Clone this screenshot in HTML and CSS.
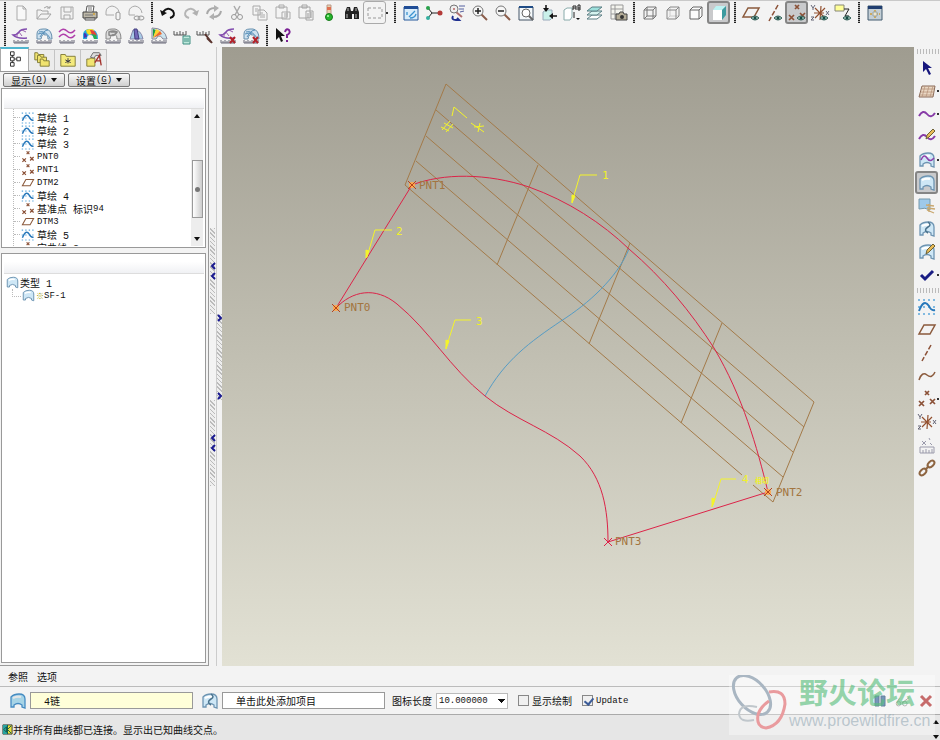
FILE: index.html
```
<!DOCTYPE html>
<html lang="zh-CN">
<head>
  <meta charset="UTF-8" />
  <meta name="viewport" content="width=device-width, initial-scale=1" />
  <title>曲面建模</title>
  <link rel="stylesheet" href="styles.css">
</head>
<body>

<!-- icon set -->
<svg class="sprite" aria-hidden="true">
  <symbol id="new" viewBox="0 0 20 20"><path d="M6 3h6l3 3v11H6zM12 3v3h3" fill="#f8f8f8" stroke="#aaa"/></symbol>
  <symbol id="open" viewBox="0 0 20 20"><path d="M3 16V7h4l1 1h6v3M3 16l4-5h10l-4 5zM10 5q3-3 6 0M16 3v2h-3" fill="none" stroke="#a4a4a4"/></symbol>
  <symbol id="save" viewBox="0 0 20 20"><path d="M4 4h12v12H4zM7 4v5h7V4M7 16v-4h6v4" fill="none" stroke="#a8a8a8"/></symbol>
  <symbol id="print" viewBox="0 0 20 20"><path d="M6 9l1-6h7l-1 6" fill="#fff" stroke="#555"/><path d="M3 9h14v6H3z" fill="#bdb8a8" stroke="#444"/><path d="M5 15h10v2H5z" fill="#eee" stroke="#555"/><path d="M8 5h4M8 7h4M5 12h8" stroke="#777"/><path d="M13 11h2" stroke="#d90"/></symbol>
  <symbol id="mail" viewBox="0 0 20 20"><path d="M11 12H3V9q0-5 6-6 6 1 7 6" fill="none" stroke="#aaa"/><path d="M13 10v6q2 2 4 0v-6q-2-2-4 0z" fill="#f4f4f4" stroke="#999"/></symbol>
  <symbol id="link" viewBox="0 0 20 20"><path d="M9 12H3V9q0-5 6-6 6 1 7 7" fill="none" stroke="#aaa"/><ellipse cx="11" cy="15" rx="3" ry="2" fill="none" stroke="#999"/><ellipse cx="15" cy="15" rx="3" ry="2" fill="none" stroke="#999"/></symbol>
  <symbol id="undo" viewBox="0 0 20 20"><path d="M5 9q5-6 10-1 3 5-3 7" fill="none" stroke="#111" stroke-width="2"/><path d="M2 7l2 6 5-3z" fill="#111"/></symbol>
  <symbol id="redo" viewBox="0 0 20 20"><path d="M15 9q-5-6-10-1-3 5 3 7" fill="none" stroke="#b5b5b5" stroke-width="2"/><path d="M18 7l-2 6-5-3z" fill="#b0b0b0"/></symbol>
  <symbol id="regen" viewBox="0 0 20 20"><path d="M3 11q1-6 8-6M17 8q-1 6-8 6" fill="none" stroke="#a8a8a8" stroke-width="2"/><path d="M10 2l5 3-5 4zM10 10l-5 4 5 3z" fill="#b0b0b0"/></symbol>
  <symbol id="cut" viewBox="0 0 20 20"><path d="M7 3l5 9M13 3l-5 9" stroke="#aaa" stroke-width="1.5"/><circle cx="7" cy="14" r="2.5" fill="none" stroke="#999"/><circle cx="13" cy="14" r="2.5" fill="none" stroke="#999"/></symbol>
  <symbol id="copy" viewBox="0 0 20 20"><path d="M3 3h7v9H3zM8 7h6l3 3v7H8z" fill="#f4f4f4" stroke="#a8a8a8"/><path d="M5 6h3M5 8h2M10 10h3M10 12h5M10 14h5" stroke="#aaa"/></symbol>
  <symbol id="paste" viewBox="0 0 20 20"><path d="M3 4h11v11H3zM6 2h5v3H6zM9 9h8v7H9z" fill="#f4f4f4" stroke="#aaa"/><path d="M11 11h4M11 13h4" stroke="#aaa"/></symbol>
  <symbol id="special" viewBox="0 0 20 20"><path d="M3 4h11v11H3zM6 2h5v3H6zM10 8h7v9h-7z" fill="#f4f4f4" stroke="#a4a4a4"/><path d="M12 10v5M14 10h2M14 12h2M14 14h2" stroke="#999"/></symbol>
  <symbol id="light" viewBox="0 0 20 20"><path d="M8 2h4v10H8z" fill="#e7d3b0" stroke="#b98"/><path d="M8 4h4v3H8z" fill="#e07050"/><circle cx="10" cy="14" r="3.5" fill="#25b52c" stroke="#177a1a"/><circle cx="9" cy="13" r="1" fill="#b5ffae"/></symbol>
  <symbol id="find" viewBox="0 0 20 20"><path d="M3 9l2-5h3l1 4h2l1-4h3l2 5v7h-5v-5h-2v5H3z" fill="#222"/><path d="M5 11v4M14 11v4M6 5v3M14 5v3" stroke="#bbb"/></symbol>
  <symbol id="select" viewBox="0 0 20 20"><path d="M3 5h14v10H3z" fill="none" stroke="#999" stroke-dasharray="3 2"/></symbol>
  <symbol id="repaint" viewBox="0 0 20 20"><path d="M3 4h14v13H3z" fill="#d8ecfa" stroke="#285a9b"/><path d="M3 3h14v3H3z" fill="#1f4c96"/><path d="M8 14l6-6M9 15q5 0 6-4M6 9v3" fill="none" stroke="#3c93d0" stroke-width="1.3"/></symbol>
  <symbol id="spin" viewBox="0 0 20 20"><path d="M4 5l4 5-4 5M8 10h8" fill="none" stroke="#222"/><circle cx="4" cy="5" r="2" fill="#28a14a"/><circle cx="4" cy="15" r="2" fill="#35b0a0"/><circle cx="16" cy="10" r="2.5" fill="#b33a38"/></symbol>
  <symbol id="orient" viewBox="0 0 20 20"><path d="M9 9l6 5" stroke="#b07070" stroke-width="2"/><circle cx="7" cy="6" r="4" fill="#eee" stroke="#777"/><path d="M12 3h6M12 6h5M13 9l4-1" stroke="#5560a0"/><circle cx="7" cy="6" r="1" fill="#b66"/><path d="M6 13q-2 4 3 4h3l-2-2" fill="none" stroke="#203090" stroke-width="2"/></symbol>
  <symbol id="zoomin" viewBox="0 0 20 20"><path d="M11 11l6 6" stroke="#8b5d4a" stroke-width="2"/><circle cx="8" cy="8" r="5" fill="#f6f6f6" stroke="#777"/><path d="M5 8h6M8 5v6" stroke="#222" stroke-width="1.5"/></symbol>
  <symbol id="zoomout" viewBox="0 0 20 20"><path d="M11 11l6 6" stroke="#8b5d4a" stroke-width="2"/><circle cx="8" cy="8" r="5" fill="#f6f6f6" stroke="#777"/><path d="M5 8h6" stroke="#222" stroke-width="1.5"/></symbol>
  <symbol id="refit" viewBox="0 0 20 20"><path d="M3 4h14v13H3z" fill="#f4f8fa" stroke="#456"/><path d="M3 3h14v2H3z" fill="#1f4c86"/><circle cx="10" cy="10" r="4" fill="#fff" stroke="#666"/><path d="M13 13l4 4" stroke="#666" stroke-width="2"/></symbol>
  <symbol id="reorient" viewBox="0 0 20 20"><path d="M4 9l3-2h6v8l-2 2H4z" fill="#c9f0ea" stroke="#9ab"/><path d="M7 2v5M18 13h-5" stroke="#111" stroke-width="1.5"/><path d="M4 5h6L7 9zM14 10v6l-4-3z" fill="#111"/></symbol>
  <symbol id="views" viewBox="0 0 20 20"><path d="M2 7l3-2h5v9l-2 3H2z" fill="#fff" stroke="#8aa"/><path d="M11 7V3h3v4M11 5h3M16 7V2h2v5h-2M16 5h2M12 9v6" fill="none" stroke="#222"/><path d="M14 15h4l-2 2z" fill="#111"/></symbol>
  <symbol id="layers" viewBox="0 0 20 20"><g stroke="#5b7f84"><path d="M2 16l5-4h10l-5 4z" fill="#fff"/><path d="M2 12l5-4h10l-5 4z" fill="#d5f3ef"/><path d="M2 8l5-4h10l-5 4z" fill="#9de0dc"/></g></symbol>
  <symbol id="capture" viewBox="0 0 20 20"><path d="M3 2h12v14H3zM3 6h12M7 2v14M3 11h12" fill="#f4f4ee" stroke="#999"/><path d="M8 11h3l1-2h3l1 2h3v6H8z" fill="#b5ad98" stroke="#444"/><circle cx="14" cy="14" r="2" fill="#333"/></symbol>
  <symbol id="wire" viewBox="0 0 20 20"><path d="M4 7h9v9H4zM7 4h9v9H7zM4 7l3-3M13 7l3-3M4 16l3-3M13 16l3-3" fill="none" stroke="#777"/></symbol>
  <symbol id="hidden" viewBox="0 0 20 20"><path d="M7 4v9h9M4 16l3-3" fill="none" stroke="#ccc"/><path d="M4 7h9v9H4zM4 7l3-3h9v9l-3 3M13 7l3-3" fill="none" stroke="#888"/></symbol>
  <symbol id="nohidden" viewBox="0 0 20 20"><path d="M4 7h9v9H4zM4 7l3-3h9v9l-3 3M13 7l3-3" fill="#fbfbfb" stroke="#666"/></symbol>
  <symbol id="shade" viewBox="0 0 20 20"><path d="M4 7l3-4h10l-4 4z" fill="#bdf3f3"/><path d="M13 7l4-4v9l-4 5z" fill="#3d9ba0"/><path d="M4 7h9v10H4z" fill="#fff"/></symbol>
  <symbol id="eye" viewBox="0 0 20 20"><path d="M10 15q4-4 8 0-4 4-8 0z" fill="#9fc5bb" stroke="#345f58"/><circle cx="14" cy="15" r="1.5" fill="#174b45"/></symbol>
  <symbol id="plane" viewBox="0 0 20 20"><path d="M7 5h11l-5 9H2z" fill="none" stroke="#8b5a3c" stroke-width="1.5"/></symbol>
  <symbol id="axis" viewBox="0 0 20 20"><path d="M14 2L5 18" stroke="#8b5137" stroke-width="1.5" stroke-dasharray="5 2"/></symbol>
  <symbol id="points" viewBox="0 0 20 20"><path d="M8 2l4 4M12 2L8 6M2 12l5 5M7 12l-5 5M13 10l5 5M18 10l-5 5" stroke="#8b5137" stroke-width="1.7"/></symbol>
  <symbol id="csys" viewBox="0 0 20 20"><path d="M11 3l-1 14M5 5l10 10M5 15L15 5M4 10h10" stroke="#93502f" stroke-width="1.2"/><path d="M1 2l2 3 2-3M3 5v2M1 14h3l-3 3h3M16 8l3 4M19 8l-3 4" fill="none" stroke="#667"/></symbol>
  <symbol id="annot" viewBox="0 0 20 20"><path d="M2 2h9v6H2z" fill="#ffff98" stroke="#887"/><path d="M11 6h5l-4 7h4" fill="none" stroke="#222"/></symbol>
  <symbol id="window" viewBox="0 0 20 20"><path d="M3 3h14v14H3z" fill="#c4cfd6" stroke="#455d70"/><path d="M3 3h14v3H3z" fill="#213e70"/><path d="M10 7v9M5 11h10" stroke="#cca95e" stroke-width="2" stroke-dasharray="2 1"/><path d="M8 9h4v4H8z" fill="#eee6cc" stroke="#98a5a8"/></symbol>
  <symbol id="ruler" viewBox="0 0 20 20"><path d="M3 14v3h14v-3M5 15v2M7 14v3M9 15v2M11 14v3M13 15v2M15 14v3" fill="none" stroke="#667"/></symbol>
  <symbol id="comb" viewBox="0 0 20 20"><path d="M16 3Q10 3 8 6T2 9q4 4 14 3" fill="none" stroke="#824daf" stroke-width="1.5"/><path d="M8 6l3 4M11 4l4 2M6 8v3" stroke="#9a62ae"/></symbol>
  <symbol id="shell" viewBox="0 0 20 20"><path d="M3 13V8q0-5 6-5h3q6 1 6 10h-4q0-5-3-4-3-2-4 4z" fill="#cfe2f0" stroke="#668fad"/><path d="M5 6q6-2 11 6M6 11q4-7 8-7M4 8q5-2 7 0" fill="none" stroke="#568fb9"/></symbol>
  <symbol id="waves" viewBox="0 0 20 20"><path d="M2 6q4-5 8-1t8-1M2 11q4-5 8-1t8-1" fill="none" stroke="#b03eaa" stroke-width="1.5"/></symbol>
  <symbol id="color" viewBox="0 0 20 20"><path d="M3 13V8q1-5 7-5 8 0 8 10h-4q0-4-4-4-3 0-3 4z" fill="#28a8dc"/><path d="M9 9q-3-2-3-5 5-2 8 0 0 4-5 5z" fill="#f8dc21"/><path d="M10 4q5-1 7 6-3-2-5-1z" fill="#e5413c"/><path d="M4 12V7q3 0 3 4z" fill="#4635b4"/><path d="M12 8l4 1 1 4h-3z" fill="#26ae4d"/></symbol>
  <symbol id="shellgray" viewBox="0 0 20 20"><path d="M3 13V8q0-5 6-5h3q6 1 6 10h-4q0-5-3-4-3-2-4 4z" fill="#ddd" stroke="#888"/><path d="M6 6q4-2 8 0-3 5-8 3zM8 6h4" fill="none" stroke="#888" stroke-width="1.5"/></symbol>
  <symbol id="slope" viewBox="0 0 20 20"><path d="M4 13l3-9q8-1 10 9z" fill="#a8cbe6" stroke="#88a"/><path d="M8 3h3l2 10H9z" fill="#7468ba" stroke="#434080"/></symbol>
  <symbol id="rays" viewBox="0 0 20 20"><path d="M3 13V2q13 0 15 11h-4q-2-4-5-3l-2 3z" fill="#cce3ed" stroke="#889"/><path d="M4 12V3l3 1z" fill="#1d9a47"/><path d="M4 12L7 3l4 2z" fill="#ffd52c"/><path d="M4 12l7-7 2 3z" fill="#f06a2b"/></symbol>
  <symbol id="ticks" viewBox="0 0 20 20"><path d="M2 5v4h12V5M5 6v3M8 5v4M11 6v3" fill="none" stroke="#555"/></symbol>
  <symbol id="cross" viewBox="0 0 20 20"><path d="M12 11l5 6M17 11l-5 6" stroke="#b3222a" stroke-width="2"/></symbol>
  <symbol id="help" viewBox="0 0 20 20"><path d="M3 2v12l3-3 2 5 2-1-2-5h4z" fill="#111"/><path d="M12 6q1-4 4-2 2 3-2 5v3M14 14v2" fill="none" stroke="#7a2094" stroke-width="2"/></symbol>
  <symbol id="tree" viewBox="0 0 20 20"><path d="M5 2h4v4H5zM5 8h4v4H5zM5 14h4v4H5zM12 8h4v4h-4zM7 6v2M7 12v2M9 10h3" fill="none" stroke="#222"/></symbol>
  <symbol id="folders" viewBox="0 0 20 20"><g fill="#f0e36f" stroke="#7d7733"><path d="M2 3h3l1 2h6v6H2z"/><path d="M5 6h3l1 2h6v6H5z"/><path d="M8 10h3l1 2h6v6H8z"/></g></symbol>
  <symbol id="favorite" viewBox="0 0 20 20"><path d="M2 5h5l1 2h10v11H2z" fill="#f4ea7d" stroke="#7d7733"/><path d="M10 9v6M7 11l6 3M13 11l-6 3" stroke="#334"/></symbol>
  <symbol id="connect" viewBox="0 0 20 20"><path d="M2 10h3l1-1h5v9H2z" fill="#f1e471" stroke="#7d7733"/><path d="M6 8l3-5h7l2 3h-6l-2 3z" fill="#ddd" stroke="#666"/><path d="M11 14l5-8 2 11M13 12h5" fill="none" stroke="#a3332d" stroke-width="1.5"/></symbol>
  <symbol id="sketch" viewBox="0 0 20 20"><path d="M1 3h18M1 17h18M1 10h18" stroke="#5ca8dc" stroke-width="1.5" stroke-dasharray="2 3"/><path d="M2 14q5-13 10-5 2 5 6 4" fill="none" stroke="#2878ba" stroke-width="2"/></symbol>
  <symbol id="surface" viewBox="0 0 20 20"><path d="M3 16V6q3-3 8-3 6 0 6 5v9l-3-1v-2q-4-3-8 0v2z" fill="#cee7f6" stroke="#6d94b2" stroke-width="1.3"/><path d="M5 7q4-2 8-1" fill="none" stroke="#fff" stroke-width="2"/></symbol>
  <symbol id="surfcurve" viewBox="0 0 20 20"><path d="M4 10q3-7 6-2t7 0" fill="none" stroke="#8d3fa9" stroke-width="1.5"/></symbol>
  <symbol id="arrow" viewBox="0 0 20 20"><path d="M6 3v11l3-3 3 6 2-1-3-6h4z" fill="#17177d"/></symbol>
  <symbol id="grid" viewBox="0 0 20 20"><path d="M5 5h13l-2 11H2z" fill="#ead8c4" stroke="#8a6a58"/><path d="M5 8h12M4 11h13M3 14h13M8 5L5 16M12 5L9 16M16 5l-3 11" stroke="#b8947c" stroke-width=".8"/></symbol>
  <symbol id="curve" viewBox="0 0 20 20"><path d="M2 12q4-7 8-2t8-1" fill="none" stroke="#873ba7" stroke-width="2"/></symbol>
  <symbol id="dcurve" viewBox="0 0 20 20"><path d="M2 14q3-9 8-5t8-3" fill="none" stroke="#8b5a3c" stroke-width="1.5"/></symbol>
  <symbol id="pencil" viewBox="0 0 20 20"><path d="M9 12l1-4 6-6 2 2-6 6z" fill="#e8bb58" stroke="#6d6135"/></symbol>
  <symbol id="trim" viewBox="0 0 20 20"><path d="M2 3h11v11q-5-3-11-1z" fill="#9ec9ea" stroke="#79a"/><path d="M9 9l8 1M10 12l8 1M10 14l7 3M12 8v8" stroke="#c9a870" stroke-width="1.3"/></symbol>
  <symbol id="surfs" viewBox="0 0 20 20"><path d="M11 3q4 3 0 5-5 3 0 6" fill="none" stroke="#49718b" stroke-width="1.5"/></symbol>
  <symbol id="check" viewBox="0 0 20 20"><path d="M4 10l4 4 8-8" fill="none" stroke="#191d83" stroke-width="3"/></symbol>
  <symbol id="chain" viewBox="0 0 20 20"><g fill="none" stroke="#8e6541" stroke-width="2"><ellipse cx="6" cy="14" rx="4" ry="2.5" transform="rotate(-45 6 14)"/><ellipse cx="14" cy="6" rx="4" ry="2.5" transform="rotate(-45 14 6)"/><path d="M8 12l4-4"/></g></symbol>
  <symbol id="glasses" viewBox="0 0 20 20"><path d="M3 12l3-5M9 12l8-6" stroke="#777"/><circle cx="5" cy="13" r="2.5" fill="none" stroke="#888"/><circle cx="12" cy="13" r="2.5" fill="none" stroke="#888"/></symbol>
  <symbol id="prompt" viewBox="0 0 12 12"><path d="M1 1h10v10H1z" fill="#e8e23c" stroke="#333"/><path d="M1 1h5v10H1z" fill="#27a3a0"/><path d="M6 1v10M10 2L6 6l4 4M2 6l3-3v6z" fill="none" stroke="#154"/></symbol>
  <symbol id="chev-left" viewBox="0 0 6 8"><path d="M5 1L2 4l3 3" fill="none" stroke="#1a1a90" stroke-width="2"/></symbol>
  <symbol id="chev-right" viewBox="0 0 6 8"><path d="M1 1l3 3-3 3" fill="none" stroke="#1a1a90" stroke-width="2"/></symbol>
</svg>

<div class="app">
  <header class="toolbars">
    <div class="toolbar">
      <span class="grip"></span>
      <button class="tool" title="新建"><svg><use href="#new"/></svg></button>
      <button class="tool" title="打开"><svg><use href="#open"/></svg></button>
      <button class="tool" title="保存"><svg><use href="#save"/></svg></button>
      <button class="tool" title="打印"><svg><use href="#print"/></svg></button>
      <button class="tool" title="发送"><svg><use href="#mail"/></svg></button>
      <button class="tool" title="发送链接"><svg><use href="#link"/></svg></button>
      <span class="grip"></span>
      <button class="tool" title="撤消"><svg><use href="#undo"/></svg></button>
      <button class="tool" title="重做"><svg><use href="#redo"/></svg></button>
      <button class="tool" title="再生"><svg><use href="#regen"/></svg></button>
      <button class="tool" title="剪切"><svg><use href="#cut"/></svg></button>
      <button class="tool" title="复制"><svg><use href="#copy"/></svg></button>
      <button class="tool" title="粘贴"><svg><use href="#paste"/></svg></button>
      <button class="tool" title="选择性粘贴"><svg><use href="#special"/></svg></button>
      <button class="tool" title="再生管理器"><svg><use href="#light"/></svg></button>
      <button class="tool" title="查找"><svg><use href="#find"/></svg></button>
      <button class="tool boxed" title="选取框"><svg><use href="#select"/></svg></button>
      <span class="drop"></span>
      <span class="grip"></span>
      <button class="tool" title="重画"><svg><use href="#repaint"/></svg></button>
      <button class="tool" title="旋转中心"><svg><use href="#spin"/></svg></button>
      <button class="tool" title="定向模式"><svg><use href="#orient"/></svg></button>
      <button class="tool" title="放大"><svg><use href="#zoomin"/></svg></button>
      <button class="tool" title="缩小"><svg><use href="#zoomout"/></svg></button>
      <button class="tool" title="重新调整"><svg><use href="#refit"/></svg></button>
      <button class="tool" title="重定向"><svg><use href="#reorient"/></svg></button>
      <button class="tool" title="视图列表"><svg><use href="#views"/></svg></button>
      <button class="tool" title="层"><svg><use href="#layers"/></svg></button>
      <button class="tool" title="视图管理器"><svg><use href="#capture"/></svg></button>
      <span class="grip"></span>
      <button class="tool" title="线框"><svg><use href="#wire"/></svg></button>
      <button class="tool" title="隐藏线"><svg><use href="#hidden"/></svg></button>
      <button class="tool" title="无隐藏线"><svg><use href="#nohidden"/></svg></button>
      <button class="tool pressed" title="着色"><svg><use href="#shade"/></svg></button>
      <span class="grip"></span>
      <button class="tool" title="平面显示"><svg><use href="#plane"/><use href="#eye"/></svg></button>
      <button class="tool" title="轴显示"><svg><use href="#axis"/><use href="#eye"/></svg></button>
      <button class="tool pressed" title="点显示"><svg><use href="#points"/><use href="#eye"/></svg></button>
      <button class="tool" title="坐标系显示"><svg><use href="#csys"/><use href="#eye"/></svg></button>
      <button class="tool" title="注释显示"><svg><use href="#annot"/><use href="#eye"/></svg></button>
      <span class="grip"></span>
      <button class="tool" title="窗口"><svg><use href="#window"/></svg></button>
    </div>
    <div class="toolbar">
      <span class="grip"></span>
      <button class="tool" title="曲率"><svg><use href="#comb"/><use href="#ruler"/></svg></button>
      <button class="tool" title="截面"><svg><use href="#shell"/><use href="#ruler"/></svg></button>
      <button class="tool" title="偏移"><svg><use href="#waves"/><use href="#ruler"/></svg></button>
      <button class="tool" title="着色曲率"><svg><use href="#color"/><use href="#ruler"/></svg></button>
      <button class="tool" title="反射"><svg><use href="#shellgray"/><use href="#ruler"/></svg></button>
      <button class="tool" title="拔模"><svg><use href="#slope"/><use href="#ruler"/></svg></button>
      <button class="tool" title="斜率"><svg><use href="#rays"/><use href="#ruler"/></svg></button>
      <button class="tool" title="已保存分析"><svg><use href="#ticks"/><path d="M11 10h7v8h-7zM12 13h5M12 15h5" fill="#bee9dc" stroke="#3f8d81"/></svg></button>
      <button class="tool" title="编辑分析"><svg><use href="#ticks"/><path d="M10 8l7 9M12 12l4 4" fill="none" stroke="#5a342e" stroke-width="2"/></svg></button>
      <button class="tool" title="删除曲率"><svg><use href="#comb"/><use href="#ruler"/><use href="#cross"/></svg></button>
      <button class="tool" title="删除截面"><svg><use href="#shell"/><use href="#ruler"/><use href="#cross"/></svg></button>
      <span class="grip"></span>
      <button class="tool" title="上下文帮助"><svg><use href="#help"/></svg></button>
    </div>
  </header>

  <main class="workspace">
    <aside class="navigator">
      <div class="tabs">
        <button class="tab active" title="模型树"><svg><use href="#tree"/></svg></button>
        <button class="tab" title="文件夹"><svg><use href="#folders"/></svg></button>
        <button class="tab" title="收藏夹"><svg><use href="#favorite"/></svg></button>
        <button class="tab" title="连接"><svg><use href="#connect"/></svg></button>
      </div>
      <div class="nav-body">
        <div class="nav-menu">
          <button class="menu-button">显示<span class="latin">(<u>O</u>)</span><i class="caret"></i></button>
          <button class="menu-button">设置<span class="latin">(<u>G</u>)</span><i class="caret"></i></button>
        </div>
        <section class="box model">
          <div class="box-head"></div>
          <div class="tree-area">
            <ul class="tree">
              <li><svg><use href="#sketch"/></svg>草绘 1</li>
              <li><svg><use href="#sketch"/></svg>草绘 2</li>
              <li><svg><use href="#sketch"/></svg>草绘 3</li>
              <li><svg><use href="#points"/></svg><span class="latin">PNT0</span></li>
              <li><svg><use href="#points"/></svg><span class="latin">PNT1</span></li>
              <li><svg><use href="#plane"/></svg><span class="latin">DTM2</span></li>
              <li><svg><use href="#sketch"/></svg>草绘 4</li>
              <li><svg><use href="#points"/></svg>基准点 标识<span class="latin">94</span></li>
              <li><svg><use href="#plane"/></svg><span class="latin">DTM3</span></li>
              <li><svg><use href="#sketch"/></svg>草绘 5</li>
              <li><svg><use href="#points"/></svg>宝曲线 3</li>
            </ul>
            <div class="scrollbar">
              <button class="scroll-arrow" title="向上"><i class="up"></i></button>
              <span class="thumb"></span>
              <button class="scroll-arrow" title="向下"><i class="caret"></i></button>
            </div>
          </div>
        </section>
        <section class="box style">
          <div class="box-head"></div>
          <ul class="style-tree">
            <li><svg><use href="#surface"/></svg>类型 1</li>
            <li class="child"><svg><use href="#surface"/></svg><span class="spark">※</span><span class="latin">SF-1</span></li>
          </ul>
        </section>
      </div>
    </aside>

    <div class="splitter">
      <div class="sash">
        <span class="handle"><svg><use href="#chev-left"/></svg><svg><use href="#chev-left"/></svg></span>
        <span class="handle"><svg><use href="#chev-left"/></svg><svg><use href="#chev-left"/></svg></span>
      </div>
      <div class="sash inner">
        <span class="handle ends"><svg><use href="#chev-right"/></svg><svg><use href="#chev-right"/></svg></span>
      </div>
    </div>

    <div class="viewport">
      <svg class="scene" viewBox="222 47 692 619" fill="none">
        <!-- datum plane grid -->
        <g class="datum">
          <path d="M742 475L405 185L446 84L814 402L773 502L753 485"/>
          <path d="M436 110L804 427M426 136L793 452M416 161L783 477"/>
          <path d="M538 165L497 265M630 243L589 344M722 323L681 423"/>
        </g>
        <path class="inner-curve" d="M629 249C617 278 588 304 561 321C530 342 505 360 485 396"/>
        <!-- boundary chains -->
        <g class="boundary">
          <path d="M412 185C443 173 487 173 529 187C568 201 602 223 629 249C663 278 691 312 714 348C743 397 757 447 768 492"/>
          <path d="M336 308L412 185"/>
          <path d="M336 308C352 291 375 286 397 304C430 331 450 368 485 396C516 421 551 430 580 456C603 478 608 510 608 542"/>
          <path d="M608 542L768 492"/>
          <path d="M604 538l8 8M612 538l-8 8"/>
        </g>
        <g class="vertex">
          <circle cx="336" cy="308" r="3"/><circle cx="412" cy="185" r="3"/><circle cx="768" cy="492" r="3"/>
          <path d="M332 304l8 8M340 304l-8 8M408 181l8 8M416 181l-8 8M764 488l8 8M772 488l-8 8"/>
        </g>
        <g class="leader">
          <path d="M572 202L580 175H597M367 257L375 230H392M446 348L455 320H471M713 505L721 479H736M452 116L454 107L467 118"/>
          <path class="tip" d="M572 203v-8l3 1zM366 258v-8l3 1zM446 349v-9l3 1zM712 507v-9l3 1z"/>
          <text x="602" y="179">1</text>
          <text x="396" y="235">2</text>
          <text x="476" y="325">3</text>
          <text x="742" y="483">4</text>
          <text class="tiny" x="755" y="483">相切</text>
          <path d="M441 127l8 4M444 123l9 5M442 130l8-9M446 132l7-8M471 123l13 9M474 127l10-1M478 132l2-9"/>
        </g>
        <g class="label">
          <text x="419" y="189">PNT1</text>
          <text x="344" y="311">PNT0</text>
          <text x="776" y="496">PNT2</text>
          <text x="615" y="545">PNT3</text>
        </g>
      </svg>
    </div>

    <nav class="side-tools">
      <span class="grip flat"></span>
      <button class="tool" title="选取"><svg><use href="#arrow"/></svg></button>
      <button class="tool more" title="活动平面"><svg><use href="#grid"/></svg></button>
      <button class="tool more" title="曲线"><svg><use href="#curve"/></svg></button>
      <button class="tool" title="编辑曲线"><svg><use href="#curve"/><use href="#pencil"/></svg></button>
      <button class="tool more" title="投影曲线"><svg><use href="#surface"/><use href="#surfcurve"/></svg></button>
      <button class="tool pressed" title="曲面"><svg><use href="#surface"/></svg></button>
      <button class="tool" title="曲面修剪"><svg><use href="#trim"/></svg></button>
      <button class="tool" title="曲面连接"><svg><use href="#surface"/><use href="#surfs"/></svg></button>
      <button class="tool" title="曲面编辑"><svg><use href="#surface"/><use href="#pencil"/></svg></button>
      <button class="tool more" title="完成"><svg><use href="#check"/></svg></button>
      <span class="grip flat"></span>
      <button class="tool" title="草绘"><svg><use href="#sketch"/></svg></button>
      <button class="tool" title="基准平面"><svg><use href="#plane"/></svg></button>
      <button class="tool" title="基准轴"><svg><use href="#axis"/></svg></button>
      <button class="tool" title="基准曲线"><svg><use href="#dcurve"/></svg></button>
      <button class="tool more" title="基准点"><svg><use href="#points"/></svg></button>
      <button class="tool" title="坐标系"><svg><use href="#csys"/></svg></button>
      <button class="tool" title="分析"><svg opacity=".5"><path d="M5 6l4 4M9 6l-4 4M12 3l1 2M13 8l2 2M3 12h14v6H3zM6 15v3M9 14v4M12 15v3M15 14v4" fill="none" stroke="#446"/></svg></button>
      <button class="tool" title="参照"><svg><use href="#chain"/></svg></button>
    </nav>
  </main>

  <footer class="dashboard">
    <div class="panel-menu">
      <button>参照</button>
      <button>选项</button>
    </div>
    <div class="options">
      <label class="collector" title="主曲线"><svg class="main-surface"><use href="#surface"/></svg><input class="active" type="text" value="4链"></label>
      <label class="collector" title="内部曲线"><svg><use href="#surface"/><use href="#surfs"/></svg><input type="text" value="单击此处添加项目"></label>
      <label class="field">图标长度
        <select><option>10.000000</option></select>
      </label>
      <label class="field tick"><input type="checkbox">显示绘制</label>
      <label class="field tick"><input type="checkbox" checked><span class="latin">Update</span></label>
      <div class="confirm">
        <button class="tool" title="暂停"><svg><path d="M4 4h4v10H4zM10 4h4v10h-4z" fill="#2b5e94" stroke="#173d68"/></svg></button>
        <button class="tool" title="预览"><svg><use href="#glasses"/></svg></button>
        <button class="tool" title="取消"><svg><path d="M4 4l10 10M14 4L4 14" stroke="#a81c1c" stroke-width="3"/></svg></button>
      </div>
    </div>
    <div class="status">
      <svg><use href="#prompt"/></svg>
      <span class="message">并非所有曲线都已连接。显示出已知曲线交点。</span>
      <span class="status-scroll"><i class="up"></i><i class="caret"></i></span>
    </div>
    <div class="watermark">
      <svg viewBox="0 0 60 60" fill="none">
        <ellipse cx="23" cy="20" rx="23" ry="14" transform="rotate(48 23 20)" stroke="#a9b6c2" stroke-width="3"/>
        <path d="M28 32Q11 28 10 39Q11 48 25 45" stroke="#c0c7cc" stroke-width="2"/>
        <path d="M40 17Q56 14 56 29Q53 50 37 53Q27 52 29 40Q31 32 40 26" stroke="#e99b9e" stroke-width="3"/>
      </svg>
      <div>
        <strong>野火论坛</strong>
        <span>www.proewildfire.cn</span>
      </div>
    </div>
  </footer>
</div>

</body>
</html>
```
FILE: styles.css
```
* {
  box-sizing: border-box;
}
body {
  margin: 0;
  font-family: "Liberation Mono", "Noto Sans CJK SC", monospace;
  font-size: 10px;
  color: #111;
  background: #f3f3f3;
}
button, input, select {
  font: inherit;
  color: inherit;
}
button {
  padding: 0;
  border: 0;
  background: none;
}
ul {
  list-style: none;
  margin: 0;
  padding: 0;
}
.sprite {
  position: absolute;
  width: 0;
  height: 0;
}
.latin {
  font-size: 9px;
}
.app {
  display: flex;
  flex-direction: column;
  height: 100vh;
}

/* toolbars */
.toolbars {
  border-top: 1px solid #c9c9c9;
  height: 47px;
  overflow: hidden;
}
.toolbar {
  display: flex;
  height: 23px;
}
.grip {
  flex: none;
  width: 9px;
  margin: 1px 0;
  background: repeating-linear-gradient(#222 0 1px, #aaa 1px 2px) center / 2px 100% no-repeat;
}
.tool {
  flex: none;
  display: flex;
  align-items: center;
  justify-content: center;
  width: 23px;
  height: 23px;
  border-radius: 3px;
}
.tool svg {
  width: 18px;
  height: 18px;
}
.toolbar .tool svg, .side-tools .tool svg {
  flex: none;
  width: 20px;
  height: 20px;
}
.boxed {
  border: 1px solid #aaa;
}
.pressed {
  border: 2px solid #858585;
  background: #c9cacc;
}
.drop {
  align-self: center;
  width: 2px;
  height: 2px;
  margin-right: 2px;
  background: #333;
}

/* middle part */
.workspace {
  flex: 1;
  display: flex;
  min-height: 0;
}
.navigator {
  display: flex;
  flex-direction: column;
  width: 209px;
}
.tabs {
  display: flex;
  height: 24px;
}
.tab {
  width: 26px;
  margin-top: 2px;
  border: 1px solid #c4c4c4;
  border-left: 0;
  background: #ececec;
}
.tab.active {
  width: 29px;
  margin-top: 0;
  border: 1px solid #aaa;
  border-top: 2px solid #4fb6cf;
  border-bottom: 0;
  background: #fff;
}
.tab svg {
  width: 18px;
  height: 18px;
}
.nav-body {
  flex: 1;
  display: flex;
  flex-direction: column;
  padding: 1px 2px 2px 1px;
  border: 1px solid #999;
  border-left: 0;
  min-height: 0;
}
.nav-menu {
  display: flex;
  gap: 3px;
  padding: 0 2px;
  margin-bottom: 1px;
}
.menu-button {
  display: flex;
  align-items: center;
  justify-content: center;
  width: 62px;
  height: 14px;
  border: 1px solid #777;
  border-radius: 2px;
  background: linear-gradient(#fafafa, #cfcfcf);
}
.caret, .up {
  border: 3px solid transparent;
  border-top: 4px solid #111;
  border-bottom: 0;
}
.up {
  border-top: 0;
  border-bottom: 4px solid #111;
}
.menu-button .caret {
  margin-left: 4px;
}
.box {
  border: 1px solid #999;
  background: #fff;
}
.box-head {
  height: 20px;
  margin: 0 1px 0 2px;
  border-bottom: 1px solid #ddd;
  background: linear-gradient(#fff 40%, #f0f1f4);
}
.model {
  height: 160px;
  margin-bottom: 5px;
}
.style {
  flex: 1;
}
.tree-area {
  display: flex;
  height: 137px;
  margin-right: 2px;
}
.tree {
  flex: 1;
  overflow: hidden;
  margin-left: 11px;
  padding-top: 2px;
  border-left: 1px dotted #bbb;
}
.tree li, .style-tree li {
  display: flex;
  align-items: center;
  height: 13px;
  white-space: pre;
}
.tree li::before {
  content: "";
  width: 6px;
  border-top: 1px dotted #bbb;
}
.tree svg {
  width: 14px;
  height: 14px;
  margin: 0 2px 0 1px;
}
.scrollbar {
  display: flex;
  flex-direction: column;
  align-items: center;
  width: 12px;
  background: #ededed;
}
.scroll-arrow {
  display: flex;
  align-items: center;
  justify-content: center;
  width: 12px;
  height: 14px;
}
.thumb {
  display: flex;
  align-items: center;
  justify-content: center;
  width: 11px;
  height: 58px;
  margin: 37px 0 auto;
  border: 1px solid #999;
  background: linear-gradient(90deg, #fff, #ccc);
}
.thumb::after {
  content: "";
  width: 5px;
  height: 5px;
  border-radius: 3px;
  background: #777;
}
.style-tree {
  padding: 2px 0 0 3px;
}
.style-tree svg {
  width: 15px;
  height: 15px;
}
.style-tree .child {
  padding-left: 7px;
}
.child::before {
  content: "";
  width: 8px;
  height: 7px;
  margin-bottom: 6px;
  border: dotted #bbb;
  border-width: 0 0 1px 1px;
}
.spark {
  width: 8px;
  font-size: 8px;
  font-weight: bold;
  color: #a09a00;
}

/* splitter */
.splitter {
  display: flex;
  width: 13px;
}
.sash {
  display: flex;
  flex-direction: column;
  align-items: center;
  justify-content: center;
  gap: 86px;
  width: 7px;
}
.sash.inner {
  width: 6px;
  border-left: 1px solid #ccc;
}
.handle {
  display: flex;
  flex-direction: column;
  align-items: center;
  justify-content: center;
  gap: 2px;
  width: 5px;
  height: 86px;
  background: repeating-linear-gradient(45deg, #bbb 0 1px, #eee 1px 3px);
}
.handle.ends {
  justify-content: space-between;
}
.handle svg {
  flex: none;
  width: 6px;
  height: 8px;
}

/* model view */
.viewport {
  flex: 1;
  min-width: 0;
  background: linear-gradient(#9f9c90, #c1bfb2 50%, #e2e1d4);
}
.scene {
  display: block;
  width: 100%;
  height: 100%;
}
.datum {
  stroke: #a37a49;
}
.boundary {
  stroke: #dc2348;
}
.inner-curve {
  stroke: #569cc4;
}
.vertex circle {
  fill: #ffa94d;
}
.vertex path {
  stroke: #b5421c;
}
.leader {
  stroke: #f4f42a;
}
.leader .tip {
  fill: #f4f42a;
}
.leader text, .label text {
  font: 11px "DejaVu Sans Mono", monospace;
  stroke: none;
  fill: #f0f02c;
}
.leader .tiny {
  font: bold 7px "Noto Sans CJK SC", sans-serif;
}
.label text {
  fill: #a3753f;
}

/* right toolbar */
.side-tools {
  display: flex;
  flex-direction: column;
  width: 26px;
  padding-left: 1px;
}
.grip.flat {
  width: auto;
  height: 9px;
  margin: 0 0 0 2px;
  background: repeating-linear-gradient(90deg, #bbb 0 1px, #f3f3f3 1px 3px) center / 100% 5px no-repeat;
}
.more::after {
  content: "";
  width: 2px;
  height: 2px;
  margin-right: -2px;
  background: #333;
}

/* dashboard */
.dashboard {
  position: relative;
}
.panel-menu {
  display: flex;
  gap: 9px;
  height: 21px;
  padding-left: 8px;
  border-bottom: 1px solid #bbb;
}
.options {
  display: flex;
  align-items: center;
  height: 28px;
  padding: 0 3px 0 8px;
  border-bottom: 1px solid #aaa;
}
.collector {
  display: flex;
  align-items: center;
  gap: 2px;
  margin-right: 7px;
}
.collector svg {
  width: 20px;
  height: 20px;
}
.collector .main-surface {
  filter: saturate(2) brightness(0.9);
}
.collector input {
  width: 163px;
  height: 17px;
  padding: 0 13px;
  border: 1px solid #999;
  background: #fff;
}
.collector .active {
  background: #ffffd9;
}
.field {
  display: flex;
  align-items: center;
  gap: 4px;
  margin-right: 10px;
  white-space: nowrap;
}
.field select {
  width: 72px;
  height: 16px;
  padding: 0 2px;
  border: 1px solid #bbb;
  background: linear-gradient(#111, #111) 61px 5px / 7px 1px no-repeat, linear-gradient(#111, #111) 62px 6px / 5px 1px no-repeat, linear-gradient(#111, #111) 63px 7px / 3px 1px no-repeat, linear-gradient(#111, #111) 64px 8px / 1px 1px no-repeat, #fff;
  appearance: none;
  font-size: 9px;
}
.tick {
  gap: 3px;
}
.tick input {
  width: 11px;
  height: 11px;
  margin: 0;
  border: 1px solid #888;
  background: #f0f0f0;
  appearance: none;
}
.tick input:checked::after {
  content: "";
  display: block;
  width: 4px;
  height: 7px;
  margin: 0 0 0 3px;
  border: solid #3c5c98;
  border-width: 0 2px 2px 0;
  rotate: 40deg;
}
.confirm {
  display: flex;
  margin-left: auto;
}
.status {
  display: flex;
  align-items: center;
  height: 25px;
  padding: 4px 0 0 2px;
  background: #e6e6e6;
}
.status svg {
  width: 11px;
  height: 11px;
}
.message {
  flex: 1;
}
.status-scroll {
  display: flex;
  flex-direction: column;
  gap: 11px;
  padding: 0 1px;
}
.watermark {
  position: absolute;
  right: 5px;
  bottom: 5px;
  display: flex;
  width: 206px;
  height: 60px;
  background: rgba(255, 255, 255, 0.35);
  pointer-events: none;
}
.watermark svg {
  flex: none;
  width: 60px;
  height: 60px;
}
.watermark strong {
  display: block;
  padding-left: 10px;
  font: bold 29px/32px "Noto Sans CJK SC", sans-serif;
  color: rgba(90, 190, 125, 0.65);
}
.watermark span {
  display: block;
  font: 16px/28px "Liberation Sans", sans-serif;
  color: rgba(150, 170, 182, 0.6);
}
```
